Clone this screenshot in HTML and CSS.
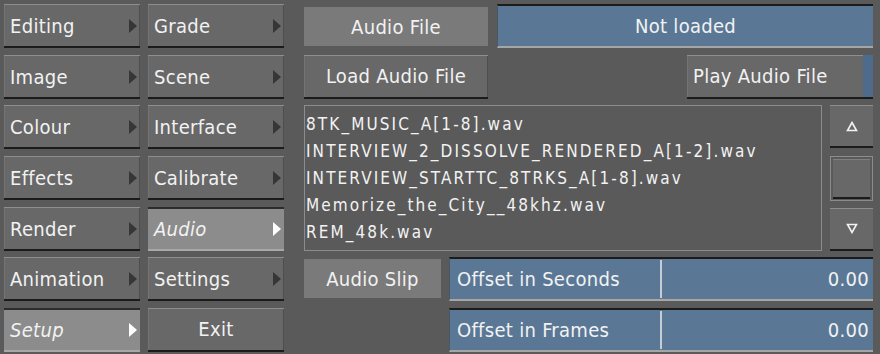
FILE: index.html
```html
<!DOCTYPE html>
<html>
<head>
<meta charset="utf-8">
<link rel="stylesheet" href="styles.css">
</head>
<body>
<div class="app">
  <div class="menu">
    <div class="mbtn"><span>Editing</span><svg class="arr" width="8" height="14" viewBox="0 0 8 14"><path d="M0 0 L8 7 L0 14 Z" fill="#363636"/></svg></div>
    <div class="mbtn"><span>Grade</span><svg class="arr" width="8" height="14" viewBox="0 0 8 14"><path d="M0 0 L8 7 L0 14 Z" fill="#363636"/></svg></div>
    <div class="mbtn"><span>Image</span><svg class="arr" width="8" height="14" viewBox="0 0 8 14"><path d="M0 0 L8 7 L0 14 Z" fill="#363636"/></svg></div>
    <div class="mbtn"><span>Scene</span><svg class="arr" width="8" height="14" viewBox="0 0 8 14"><path d="M0 0 L8 7 L0 14 Z" fill="#363636"/></svg></div>
    <div class="mbtn"><span>Colour</span><svg class="arr" width="8" height="14" viewBox="0 0 8 14"><path d="M0 0 L8 7 L0 14 Z" fill="#363636"/></svg></div>
    <div class="mbtn"><span>Interface</span><svg class="arr" width="8" height="14" viewBox="0 0 8 14"><path d="M0 0 L8 7 L0 14 Z" fill="#363636"/></svg></div>
    <div class="mbtn"><span>Effects</span><svg class="arr" width="8" height="14" viewBox="0 0 8 14"><path d="M0 0 L8 7 L0 14 Z" fill="#363636"/></svg></div>
    <div class="mbtn"><span>Calibrate</span><svg class="arr" width="8" height="14" viewBox="0 0 8 14"><path d="M0 0 L8 7 L0 14 Z" fill="#363636"/></svg></div>
    <div class="mbtn"><span>Render</span><svg class="arr" width="8" height="14" viewBox="0 0 8 14"><path d="M0 0 L8 7 L0 14 Z" fill="#363636"/></svg></div>
    <div class="mbtn sel"><span>Audio</span><svg class="arr" width="8" height="14" viewBox="0 0 8 14"><path d="M0 0 L8 7 L0 14 Z" fill="#ffffff"/></svg></div>
    <div class="mbtn"><span>Animation</span><svg class="arr" width="8" height="14" viewBox="0 0 8 14"><path d="M0 0 L8 7 L0 14 Z" fill="#363636"/></svg></div>
    <div class="mbtn"><span>Settings</span><svg class="arr" width="8" height="14" viewBox="0 0 8 14"><path d="M0 0 L8 7 L0 14 Z" fill="#363636"/></svg></div>
    <div class="mbtn sel"><span>Setup</span><svg class="arr" width="8" height="14" viewBox="0 0 8 14"><path d="M0 0 L8 7 L0 14 Z" fill="#ffffff"/></svg></div>
    <div class="mbtn exit"><span>Exit</span></div>
  </div>
  <div class="panel">
    <div class="row">
      <div class="label wide">Audio File</div>
      <div class="field gap9 center">Not loaded</div>
    </div>
    <div class="row">
      <div class="btn load">Load Audio File</div>
      <div class="btn play"><span class="play-txt">Play Audio File</span><span class="ind"></span></div>
    </div>
    <div class="row">
      <div class="list">
        <div class="item">8TK_MUSIC_A[1-8].wav</div>
        <div class="item">INTERVIEW_2_DISSOLVE_RENDERED_A[1-2].wav</div>
        <div class="item">INTERVIEW_STARTTC_8TRKS_A[1-8].wav</div>
        <div class="item">Memorize_the_City__48khz.wav</div>
        <div class="item">REM_48k.wav</div>
      </div>
      <div class="scroll">
        <div class="sbtn">
          <svg width="12" height="11" viewBox="0 0 12 11"><path d="M6 1.5 L10.5 9.5 L1.5 9.5 Z" fill="none" stroke="#f2f2f2" stroke-width="1.6" stroke-linejoin="miter"/></svg>
        </div>
        <div class="thumb"><div class="thumb-in"></div></div>
        <div class="sbtn">
          <svg width="12" height="11" viewBox="0 0 12 11"><path d="M1.5 1.5 L10.5 1.5 L6 9.5 Z" fill="none" stroke="#f2f2f2" stroke-width="1.6" stroke-linejoin="miter"/></svg>
        </div>
      </div>
    </div>
    <div class="row">
      <div class="label slip">Audio Slip</div>
      <div class="field gap8 split">
        <span class="fname">Offset in Seconds</span>
        <span class="fval">0.00</span>
      </div>
    </div>
    <div class="row">
      <div class="field indent split">
        <span class="fname">Offset in Frames</span>
        <span class="fval">0.00</span>
      </div>
    </div>
  </div>
</div>
</body>
</html>
```

FILE: styles.css
```css
* { box-sizing: border-box; }
html, body {
  margin: 0;
  padding: 0;
  background: #5a5a5a;
}
body {
  width: 880px;
  height: 354px;
  overflow: hidden;
  font-family: "DejaVu Sans Condensed", "Liberation Sans Narrow", "DejaVu Sans", sans-serif;
  font-size: 20px;
  letter-spacing: 0.3px;
  color: #f2f2f2;
}
.app {
  display: flex;
  padding: 4px 0 0 4px;
  height: 354px;
}
.menu {
  display: grid;
  grid-template-columns: 136px 136px;
  grid-template-rows: repeat(7, 44px);
  column-gap: 8px;
  row-gap: 6.67px;
}
.mbtn {
  display: flex;
  align-items: center;
  justify-content: space-between;
  padding: 1px 3px 0 6px;
  background: #686868;
  border-top: 1px solid #8e8e8e;
  border-bottom: 2px solid #1b1b1b;
  box-shadow: inset 1px 0 0 #747474, inset -1px 0 0 #4e4e4e;
}
.arr {
  display: block;
  flex: none;
}
.mbtn.sel {
  background: #8c8c8c;
  border-top: 2px solid #2c2c2c;
  border-bottom: 2px solid #a8a8a8;
  box-shadow: none;
  font-style: italic;
}
.mbtn.exit { justify-content: center; padding: 0; }

.panel {
  margin-left: 20px;
  width: 569px;
  display: grid;
  grid-template-rows: 44px 44px 1fr 44px 44px;
  row-gap: 6.67px;
  height: 348px;
}
.row {
  display: flex;
}
.label {
  background: #7a7a7a;
  height: 39px;
  display: flex;
  align-items: center;
  justify-content: center;
}
.label.wide { width: 184px; margin-top: 3px; }
.label.slip { width: 137px; margin-top: 2px; }
.field {
  flex: 1;
  background: #5a7896;
  border-top: 2px solid #1c1c1c;
  border-bottom: 2px solid #a6a6a6;
  border-left: 1px solid #4a5866;
  display: flex;
  align-items: center;
}
.field.center { justify-content: center; }
.gap9 { margin-left: 9px; }
.gap8 { margin-left: 8px; }
.indent { margin-left: 145px; }
.fname {
  width: 212px;
  padding-left: 7px;
  align-self: stretch;
  display: flex;
  align-items: center;
  border-right: 2px solid #c4ccd4;
  margin: 1px 0;
}
.fval {
  flex: 1;
  text-align: right;
  padding-right: 4px;
}
.btn {
  background: #686868;
  border-top: 1px solid #8e8e8e;
  border-bottom: 2px solid #1b1b1b;
  display: flex;
  align-items: center;
  box-shadow: inset 1px 0 0 #747474, inset -1px 0 0 #4e4e4e;
}
.btn.load { width: 184px; justify-content: center; }
.btn.play {
  width: 186px;
  margin-left: auto;
  padding-left: 6px;
  box-shadow: inset 1px 0 0 #747474;
}
.play-txt { flex: 1; }
.ind {
  width: 10px;
  align-self: stretch;
  background: #4f6b8c;
  margin-top: -1px;
}
.list {
  width: 518px;
  border: 1px solid #8c8c8c;
  padding: 5px 0 0 1px;
  font-size: 17px;
  letter-spacing: 2.1px;
}
.item {
  height: 27px;
  line-height: 27px;
  white-space: nowrap;
}
.scroll {
  margin-left: 8px;
  width: 43px;
  display: flex;
  flex-direction: column;
  justify-content: space-between;
}
.sbtn {
  height: 43px;
  background: #686868;
  border-top: 1px solid #8e8e8e;
  border-bottom: 2px solid #1b1b1b;
  display: flex;
  align-items: center;
  justify-content: center;
}
.thumb {
  height: 45px;
  border: 1px solid #8c8c8c;
  padding: 2px 2px 1px 2px;
  display: flex;
}
.thumb-in {
  flex: 1;
  background: #686868;
  border-top: 1px solid #808080;
  border-bottom: 2px solid #1b1b1b;
}
```
